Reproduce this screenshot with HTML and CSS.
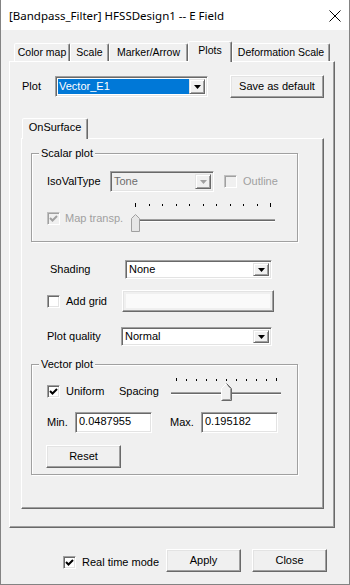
FILE: index.html
```html
<!DOCTYPE html>
<html lang="en">
<head>
    <meta charset="UTF-8">
    <title>E Field</title>
    <link rel="stylesheet" href="styles.css">
</head>
<body>
    <div class="window">
        <div class="titlebar">
            <span class="title">[Bandpass_Filter] HFSSDesign1 -- E Field</span>
            <svg class="close" width="12" height="12" viewBox="0 0 12 12">
                <path d="M0.5 0.5 L11.5 11.5 M11.5 0.5 L0.5 11.5" stroke="#000" stroke-width="1" fill="none"/>
            </svg>
        </div>

        <div class="tabs">
            <div class="tab w-color">Color map</div>
            <div class="tab w-scale">Scale</div>
            <div class="tab w-marker">Marker/Arrow</div>
            <div class="tab tab-active w-plots">Plots</div>
            <div class="tab w-deform">Deformation Scale</div>
        </div>

        <div class="panel">
            <div class="plot-row">
                <span class="plot-label">Plot</span>
                <div class="combo combo-plot">
                    <span class="combo-text selected">Vector_E1</span>
                    <span class="drop"><svg width="7" height="4"><polygon points="0,0 7,0 3.5,4" fill="#000"/></svg></span>
                </div>
                <button class="btn btn-save">Save as default</button>
            </div>

            <div class="subtabs">
                <div class="tab tab-active w-surface">OnSurface</div>
            </div>

            <div class="subpanel">
                <fieldset class="group group-scalar">
                    <legend>Scalar plot</legend>
                    <div class="row row-iso">
                        <span class="iso-label">IsoValType</span>
                        <div class="combo combo-iso disabled">
                            <span class="combo-text">Tone</span>
                            <span class="drop"><svg width="7" height="4"><polygon points="0,0 7,0 3.5,4" fill="#a0a0a0"/></svg></span>
                        </div>
                        <span class="check check-disabled check-outline"></span>
                        <span class="check-text muted">Outline</span>
                    </div>
                    <div class="row row-transp">
                        <span class="check check-disabled">
                            <svg width="11" height="11" viewBox="0 0 11 11"><polyline points="2,5 4.5,7.5 9,3" stroke="#a0a0a0" stroke-width="2" fill="none"/></svg>
                        </span>
                        <span class="check-text muted transp-label">Map transp.</span>
                        <svg class="slider" width="148" height="30" viewBox="0 0 148 30">
                            <g stroke="#000" stroke-width="1">
                                <line x1="6.5" y1="0" x2="6.5" y2="4"/>
                                <line x1="20.5" y1="1" x2="20.5" y2="3"/>
                                <line x1="33.5" y1="1" x2="33.5" y2="3"/>
                                <line x1="47.5" y1="1" x2="47.5" y2="3"/>
                                <line x1="60.5" y1="1" x2="60.5" y2="3"/>
                                <line x1="74.5" y1="1" x2="74.5" y2="3"/>
                                <line x1="87.5" y1="1" x2="87.5" y2="3"/>
                                <line x1="101.5" y1="1" x2="101.5" y2="3"/>
                                <line x1="114.5" y1="1" x2="114.5" y2="3"/>
                                <line x1="128.5" y1="1" x2="128.5" y2="3"/>
                                <line x1="141.5" y1="0" x2="141.5" y2="4"/>
                            </g>
                            <line x1="2" y1="16.5" x2="146" y2="16.5" stroke="#a0a0a0"/>
                            <line x1="2" y1="17.5" x2="146" y2="17.5" stroke="#696969"/>
                            <line x1="2" y1="18.5" x2="146" y2="18.5" stroke="#fff"/>
                            <polygon points="2.5,15.5 6.5,11.5 10.5,15.5 10.5,28.5 2.5,28.5" fill="#e6e6e6" stroke="#a0a0a0"/>
                        </svg>
                    </div>
                </fieldset>

                <div class="row row-shading">
                    <span class="shade-label">Shading</span>
                    <div class="combo combo-shading">
                        <span class="combo-text">None</span>
                        <span class="drop"><svg width="7" height="4"><polygon points="0,0 7,0 3.5,4" fill="#000"/></svg></span>
                    </div>
                </div>

                <div class="row row-grid">
                    <span class="check"></span>
                    <span class="check-text grid-label">Add grid</span>
                    <button class="btn btn-swatch"><span class="swatch"></span></button>
                </div>

                <div class="row row-quality">
                    <span class="quality-label">Plot quality</span>
                    <div class="combo combo-quality">
                        <span class="combo-text">Normal</span>
                        <span class="drop"><svg width="7" height="4"><polygon points="0,0 7,0 3.5,4" fill="#000"/></svg></span>
                    </div>
                </div>

                <fieldset class="group group-vector">
                    <legend>Vector plot</legend>
                    <div class="row row-uniform">
                        <span class="check">
                            <svg width="11" height="11" viewBox="0 0 11 11"><polyline points="2,5 4.5,7.5 9,3" stroke="#000" stroke-width="2" fill="none"/></svg>
                        </span>
                        <span class="check-text uniform-label">Uniform</span>
                        <span class="spacing-label">Spacing</span>
                        <svg class="slider" width="114" height="26" viewBox="0 0 114 26">
                            <g stroke="#000" stroke-width="1">
                                <line x1="7.5" y1="0" x2="7.5" y2="3"/>
                                <line x1="17.5" y1="1" x2="17.5" y2="3"/>
                                <line x1="27.5" y1="1" x2="27.5" y2="3"/>
                                <line x1="37.5" y1="1" x2="37.5" y2="3"/>
                                <line x1="47.5" y1="1" x2="47.5" y2="3"/>
                                <line x1="57.5" y1="1" x2="57.5" y2="3"/>
                                <line x1="67.5" y1="1" x2="67.5" y2="3"/>
                                <line x1="77.5" y1="1" x2="77.5" y2="3"/>
                                <line x1="87.5" y1="1" x2="87.5" y2="3"/>
                                <line x1="97.5" y1="1" x2="97.5" y2="3"/>
                                <line x1="107.5" y1="0" x2="107.5" y2="3"/>
                            </g>
                            <line x1="2" y1="14.5" x2="112" y2="14.5" stroke="#a0a0a0"/>
                            <line x1="2" y1="15.5" x2="112" y2="15.5" stroke="#696969"/>
                            <line x1="2" y1="16.5" x2="112" y2="16.5" stroke="#fff"/>
                            <polygon points="52.5,10.5 57.5,5.5 62.5,10.5 62.5,22.5 52.5,22.5" fill="#f0f0f0" stroke="#fff"/>
                            <polyline points="57.5,5.5 62.5,10.5 62.5,22.5 52.5,22.5" fill="none" stroke="#696969"/>
                            <polyline points="58.5,7.5 61.5,10.5 61.5,21.5 53.5,21.5" fill="none" stroke="#a0a0a0"/>
                        </svg>
                    </div>
                    <div class="row row-range">
                        <span class="min-label">Min.</span>
                        <span class="field">0.0487955</span>
                        <span class="max-label">Max.</span>
                        <span class="field">0.195182</span>
                    </div>
                    <div class="row row-reset">
                        <button class="btn btn-reset">Reset</button>
                    </div>
                </fieldset>
            </div>
        </div>

        <div class="footer">
            <div class="realtime">
                <span class="check">
                    <svg width="11" height="11" viewBox="0 0 11 11"><polyline points="2,5 4.5,7.5 9,3" stroke="#000" stroke-width="2" fill="none"/></svg>
                </span>
                <span class="check-text realtime-label">Real time mode</span>
            </div>
            <button class="btn btn-footer">Apply</button>
            <button class="btn btn-footer btn-close">Close</button>
        </div>
    </div>
</body>
</html>
```

FILE: styles.css
```css
* { box-sizing: border-box; }
html, body { margin: 0; padding: 0; }
body { width: 350px; height: 585px; overflow: hidden; background: #f0f0f0; color: #000; font-family: "Liberation Sans", Arial, sans-serif; font-size: 11px; line-height: 13px; }

.window { width: 350px; height: 585px; background: #f0f0f0; border: 1px solid #838383; border-top: none; }

/* title bar */
.titlebar { height: 30px; background: #fff; display: flex; align-items: center; justify-content: space-between; padding: 0 8px 0 8px; }
.title { font-family: "Noto Sans", "Open Sans", sans-serif; font-size: 11.5px; color: #000; }
.close { display: block; margin-top: 1px; }

/* tabs */
.tabs { height: 31px; display: flex; align-items: flex-end; padding-left: 13px; }
.tab { height: 18px; background: #f0f0f0; border: 1px solid; border-bottom: none; border-color: #fff #696969 transparent #fff; border-radius: 2px 2px 0 0; box-shadow: inset -1px 0 0 #a0a0a0; text-align: center; font-size: 10.5px; line-height: 16px; }
.tab-active { height: 21px; margin-bottom: -1px; position: relative; z-index: 1; line-height: 17px; }
.w-color { width: 56px; }
.w-scale { width: 39px; }
.w-marker { width: 79px; }
.w-plots { width: 44px; }
.w-deform { width: 98px; }
.w-surface { width: 66px; font-size: 11px; }

.panel { margin-left: 8px; width: 326px; height: 467px; border: 1px solid; border-color: #fff #696969 #696969 #fff; box-shadow: inset -1px -1px 0 #a0a0a0; padding-top: 13px; }

/* buttons */
.btn { font-family: inherit; font-size: 11px; line-height: 13px; color: #000; background: #f0f0f0; border: 1px solid; border-color: #fff #696969 #696969 #fff; box-shadow: inset -1px -1px 0 #a0a0a0, inset 1px 1px 0 #e3e3e3; padding: 0; margin: 0; }

/* combo boxes */
.combo { display: flex; background: #fff; padding: 2px; border: 1px solid; border-color: #a0a0a0 #fff #fff #a0a0a0; box-shadow: inset 1px 1px 0 #696969, inset -1px -1px 0 #e3e3e3; }
.combo-text { flex: 1; padding-left: 1px; display: flex; align-items: center; }
.combo-text.selected { background: #0078d7; color: #fff; }
.drop { width: 16px; display: flex; align-items: center; justify-content: center; background: #f0f0f0; border: 1px solid; border-color: #e3e3e3 #696969 #696969 #e3e3e3; box-shadow: inset 1px 1px 0 #fff, inset -1px -1px 0 #a0a0a0; }
.drop svg { display: block; }
.combo.disabled { background: #f0f0f0; color: #6d6d6d; }

/* plot row */
.plot-row { display: flex; align-items: center; height: 23px; padding-left: 12px; }
.plot-label { width: 33px; }
.combo-plot { width: 153px; height: 21px; }
.btn-save { margin-left: 22px; width: 94px; height: 23px; }

.subtabs { margin-top: 20px; height: 20px; display: flex; align-items: flex-end; padding-left: 12px; }
.subpanel { margin-left: 11px; width: 303px; height: 371px; border: 1px solid; border-color: #fff #696969 #696969 #fff; box-shadow: inset -1px -1px 0 #a0a0a0; padding-left: 9px; }

/* group boxes */
.group { margin: 0; padding: 0; width: 267px; border: 1px solid #a0a0a0; box-shadow: 1px 1px 0 #fff, inset 1px 1px 0 #fff; }
.group legend { margin-left: 7px; padding: 0 2px; line-height: 13px; background: #f0f0f0; }
.group-scalar { margin-top: 8px; padding-bottom: 8px; }
.group-vector { margin-top: 12px; padding-bottom: 6px; }

.row { display: flex; align-items: center; }

.check { width: 13px; height: 13px; flex: none; background: #fff; border: 1px solid; border-color: #a0a0a0 #fff #fff #a0a0a0; box-shadow: inset 1px 1px 0 #696969, inset -1px -1px 0 #e3e3e3; display: flex; align-items: center; justify-content: center; }
.check svg { display: block; }
.check-disabled { background: #f0f0f0; border-color: #c0c0c0 #fff #fff #c0c0c0; box-shadow: inset 1px 1px 0 #a0a0a0; }
.check-text { padding-left: 6px; }
.muted { color: #a0a0a0; }

.row-iso { margin-top: 11px; height: 21px; padding-left: 15px; }
.iso-label { width: 63px; }
.combo-iso { width: 104px; height: 21px; }
.check-outline { margin-left: 10px; }

.row-transp { margin-top: 11px; height: 30px; padding-left: 15px; }
.transp-label { width: 69px; padding-left: 5px; }
.slider { display: block; }

.row-shading { margin-top: 18px; height: 19px; padding-left: 19px; }
.shade-label { width: 75px; }
.combo-shading { width: 147px; height: 19px; }

.row-grid { margin-top: 11px; height: 22px; padding-left: 16px; }
.grid-label { width: 62px; }
.btn-swatch { width: 152px; height: 22px; padding: 3px; display: flex; }
.swatch { flex: 1; background: #fafafa; }

.row-quality { margin-top: 15px; height: 19px; padding-left: 16px; }
.quality-label { width: 74px; }
.combo-quality { width: 151px; height: 19px; }

.row-uniform { margin-top: 7px; height: 26px; padding-left: 15px; }
.uniform-label { width: 59px; }
.spacing-label { width: 50px; }

.row-range { margin-top: 8px; height: 21px; padding-left: 15px; }
.min-label { width: 28px; }
.max-label { width: 31px; margin-left: 18px; }
.field { width: 77px; height: 21px; background: #fff; border: 1px solid; border-color: #a0a0a0 #fff #fff #a0a0a0; box-shadow: inset 1px 1px 0 #696969, inset -1px -1px 0 #e3e3e3; padding: 2px 0 0 3px; }

.row-reset { margin-top: 12px; padding-left: 14px; }
.btn-reset { width: 75px; height: 23px; }

/* footer */
.footer { margin-top: 21px; display: flex; align-items: flex-end; padding-left: 62px; }
.realtime { display: flex; align-items: center; margin-bottom: 3px; }
.realtime-label { width: 90px; }
.btn-footer { width: 75px; height: 23px; }
.btn-close { margin-left: 11px; }
```
